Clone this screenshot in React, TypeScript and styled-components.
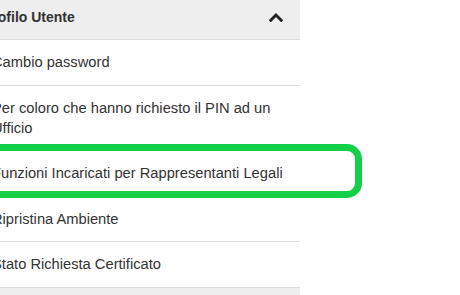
import React from "react";
import styled, { createGlobalStyle } from "styled-components";

const Global = createGlobalStyle`
  html, body { margin: 0; padding: 0; background: #ffffff; }
  body { font-family: "Liberation Sans", Arial, sans-serif; color: #333333; overflow: hidden; }
`;

const Page = styled.div`
  position: relative;
  width: 460px;
  height: 295px;
  overflow: hidden;
`;

const Panel = styled.div`
  margin-left: -30px;
  width: 330px;
`;

const Heading = styled.div`
  display: flex;
  align-items: center;
  justify-content: space-between;
  background: #eeeeee;
  border-bottom: 1px solid #dddddd;
  padding: 7px 17px 12px 13px;
  font-size: 14px;
  line-height: 20px;
  font-weight: bold;
  color: #333333;
`;

const NextHeading = styled(Heading)`
  border-top: 1px solid #dddddd;
  height: 20px;
`;

const List = styled.ul`
  list-style: none;
  margin: 0;
  padding: 0;
`;

const Item = styled.li`
  padding: 12px 8px 12.5px 22px;
  font-size: 14.7px;
  line-height: 20px;
  color: #333333;
  border-bottom: 1px solid #dddddd;
  &:last-child { border-bottom: none; }
`;

const Highlight = styled.div`
  position: absolute;
  left: -20px;
  top: 144px;
  width: 382px;
  height: 54px;
  box-sizing: border-box;
  border: 7px solid #14cf48;
  border-radius: 15px;
  pointer-events: none;
`;

const Chevron = () => (
  <svg width="14" height="10" viewBox="0 0 14 10">
    <path d="M1.8 8.2 L7 3 L12.2 8.2" fill="none" stroke="#222" strokeWidth="3" strokeLinecap="square" />
  </svg>
);

const items = [
  "Cambio password",
  "Per coloro che hanno richiesto il PIN ad un Ufficio",
  "Funzioni Incaricati per Rappresentanti Legali",
  "Ripristina Ambiente",
  "Stato Richiesta Certificato",
];

export default function App() {
  return (
    <Page>
      <Global />
      <Panel>
        <Heading>
          <span>Profilo Utente</span>
          <Chevron />
        </Heading>
        <List>
          {items.map((t) => (
            <Item key={t}>{t}</Item>
          ))}
        </List>
        <NextHeading />
      </Panel>
      <Highlight />
    </Page>
  );
}
